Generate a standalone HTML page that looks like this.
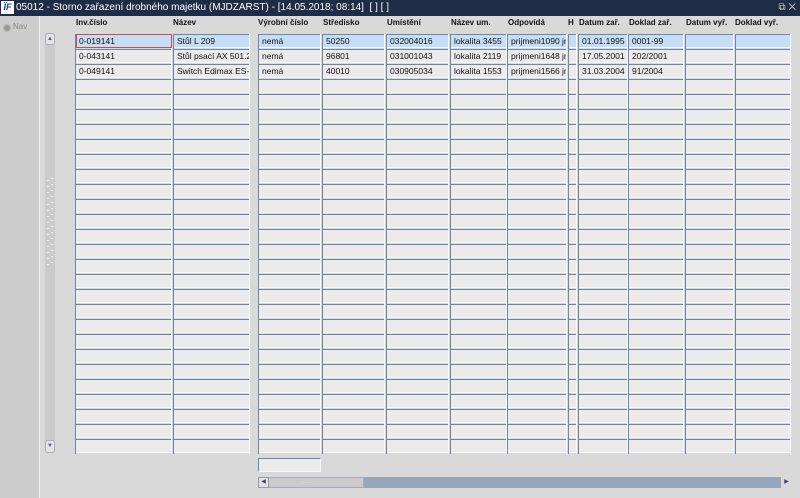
<!DOCTYPE html>
<html><head><meta charset="utf-8"><style>
*{margin:0;padding:0;box-sizing:border-box}
body{width:800px;height:498px;overflow:hidden;background:#d9d9d9;font-family:"Liberation Sans",Arial,sans-serif;position:relative}
.a{position:absolute}
#title{left:0;top:0;width:800px;height:16px;background:#1e2c46;color:#fff;font-size:10px;line-height:16px;padding-left:16px;white-space:nowrap}
#logo{left:1px;top:1px;width:13px;height:13px;background:#fff;color:#1a3cc0;font-size:9px;font-weight:bold;font-style:italic;line-height:13px;text-align:center}
#left{left:0;top:16px;width:40px;height:482px;background:#cdcdcd;border-right:1px solid #f2f2f2}
.col{position:absolute;top:34px;height:420px;border-left:1px solid #6f85a8;border-right:1px solid #f8f8f8;
background-image:linear-gradient(to bottom,#6f85a8 0px,#6f85a8 1px,#ebebeb 1px,#ebebeb 13px,#f8f8f8 13px,#f8f8f8 14px,#d9d9d9 14px,#d9d9d9 15px);background-size:100% 15px;background-repeat:repeat-y}
.h{position:absolute;top:18px;font-size:8px;font-weight:bold;color:#111;white-space:nowrap}
.c{position:absolute;height:12px;font-size:8.5px;line-height:12px;padding-left:3px;color:#111;white-space:nowrap;overflow:hidden}
.b{background:#c6ddf6}
</style></head><body>
<div id="title" class="a">05012 - Storno zařazení drobného majetku (MJDZARST) - [14.05.2018; 08:14]&nbsp; [ ] [ ]</div>
<div id="logo" class="a">ÏF</div>
<div class="a" style="right:4px;top:0;color:#ccc;font-size:10px;line-height:16px">⧉ ✕</div>
<div id="left" class="a"></div>
<div class="a" style="left:3px;top:24px;width:8px;height:8px;border-radius:50%;background:#999;border:1px solid #bbb"></div>
<div class="a" style="left:13px;top:22px;font-size:8px;color:#888">Nav</div>
<!-- vertical scrollbar -->
<div class="a" style="left:45px;top:33px;width:10px;height:420px;background:#cbcbcb;border-radius:3px"></div>
<div class="a" style="left:45px;top:33px;width:10px;height:12px;background:#e4e4e4;border:1px solid #aab;border-radius:3px;font-size:6px;text-align:center;color:#557;line-height:10px">▲</div>
<div class="a" style="left:45px;top:440px;width:10px;height:13px;background:#e4e4e4;border:1px solid #aab;border-radius:3px;font-size:6px;text-align:center;color:#557;line-height:10px">▼</div>
<div class="a" style="left:47px;top:180px;width:2px;height:86px;background:repeating-linear-gradient(to bottom,#ededed 0,#ededed 1px,transparent 1px,transparent 6px)"></div>
<div class="a" style="left:51px;top:178px;width:2px;height:86px;background:repeating-linear-gradient(to bottom,#ededed 0,#ededed 1px,transparent 1px,transparent 6px)"></div>
<!-- headers -->
<div class="h" style="left:76px">Inv.číslo</div>
<div class="h" style="left:173px">Název</div>
<div class="h" style="left:258px">Výrobní číslo</div>
<div class="h" style="left:323px">Středisko</div>
<div class="h" style="left:387px">Umístění</div>
<div class="h" style="left:451px">Název um.</div>
<div class="h" style="left:508px">Odpovídá</div>
<div class="h" style="left:568px">H</div>
<div class="h" style="left:579px">Datum zař.</div>
<div class="h" style="left:629px">Doklad zař.</div>
<div class="h" style="left:686px">Datum vyř.</div>
<div class="h" style="left:735px">Doklad vyř.</div>
<!-- columns -->
<div class="col" style="left:75px;width:97px"></div>
<div class="col" style="left:173px;width:77px"></div>
<div class="col" style="left:258px;width:63px"></div>
<div class="col" style="left:322px;width:63px"></div>
<div class="col" style="left:386px;width:63px"></div>
<div class="col" style="left:450px;width:57px"></div>
<div class="col" style="left:507px;width:60px"></div>
<div class="col" style="left:568px;width:9px"></div>
<div class="col" style="left:578px;width:50px"></div>
<div class="col" style="left:628px;width:56px"></div>
<div class="col" style="left:685px;width:49px"></div>
<div class="col" style="left:735px;width:56px"></div>
<!-- row 1 highlight -->
<div class="c b" style="left:76px;width:96px;border:1px solid #d04848;height:14px;top:34px;line-height:12px;padding-left:2px">0-019141</div>
<div class="c b" style="left:174px;top:35px;width:75px">Stůl L 209</div>
<div class="c b" style="left:259px;top:35px;width:61px">nemá</div>
<div class="c b" style="left:323px;top:35px;width:61px">50250</div>
<div class="c b" style="left:387px;top:35px;width:61px">032004016</div>
<div class="c b" style="left:451px;top:35px;width:55px">lokalita 3455</div>
<div class="c b" style="left:508px;top:35px;width:58px">prijmeni1090 jm</div>
<div class="c b" style="left:569px;top:35px;width:7px"></div>
<div class="c b" style="left:579px;top:35px;width:48px">01.01.1995</div>
<div class="c b" style="left:629px;top:35px;width:54px">0001-99</div>
<div class="c b" style="left:686px;top:35px;width:47px"></div>
<div class="c b" style="left:736px;top:35px;width:54px"></div>
<!-- row 2 -->
<div class="c" style="left:76px;top:50px">0-043141</div>
<div class="c" style="left:174px;top:50px;width:75px">Stůl psací AX 501.2</div>
<div class="c" style="left:259px;top:50px">nemá</div>
<div class="c" style="left:323px;top:50px">96801</div>
<div class="c" style="left:387px;top:50px">031001043</div>
<div class="c" style="left:451px;top:50px">lokalita 2119</div>
<div class="c" style="left:508px;top:50px;width:58px">prijmeni1648 jm</div>
<div class="c" style="left:579px;top:50px">17.05.2001</div>
<div class="c" style="left:629px;top:50px">202/2001</div>
<!-- row 3 -->
<div class="c" style="left:76px;top:65px">0-049141</div>
<div class="c" style="left:174px;top:65px;width:75px">Switch Edimax ES-3</div>
<div class="c" style="left:259px;top:65px">nemá</div>
<div class="c" style="left:323px;top:65px">40010</div>
<div class="c" style="left:387px;top:65px">030905034</div>
<div class="c" style="left:451px;top:65px">lokalita 1553</div>
<div class="c" style="left:508px;top:65px;width:58px">prijmeni1566 jm</div>
<div class="c" style="left:579px;top:65px">31.03.2004</div>
<div class="c" style="left:629px;top:65px">91/2004</div>
<!-- bottom -->
<div class="a" style="left:258px;top:458px;width:63px;height:14px;background:#ebebeb;border-top:1px solid #6f85a8;border-left:1px solid #6f85a8;border-right:1px solid #f8f8f8;border-bottom:1px solid #f8f8f8"></div>
<div class="a" style="left:258px;top:477px;width:534px;height:11px;background:#97a7ba"></div>
<div class="a" style="left:258px;top:477px;width:106px;height:11px;background:#cbcbcb;border:1px solid #aab"></div>
<div class="a" style="left:258px;top:477px;width:11px;height:11px;background:#e2e2e2;border:1px solid #99a;font-size:6px;line-height:9px;text-align:center;color:#446">◀</div>
<div class="a" style="left:781px;top:477px;width:11px;height:11px;background:#d8d8d8;font-size:6px;line-height:11px;text-align:center;color:#446">▶</div>
<div class="a" style="left:300px;top:480px;font-size:6px;color:#f4f4f4;letter-spacing:1px">∙∙∙∙∙∙</div>
</body></html>
